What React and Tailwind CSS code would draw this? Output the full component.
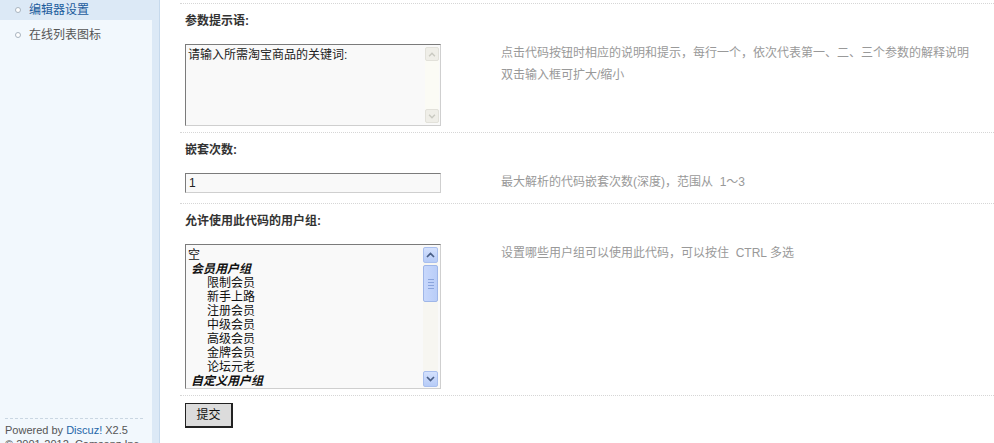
import React from "react";

const FONT = "font-['Liberation_Sans','Noto_Sans_CJK_SC',sans-serif]";

function Chevron({ dir, color, w = 9, h = 6 }) {
  return (
    <svg width={w} height={h} viewBox="0 0 9 6">
      <path
        d={dir === "up" ? "M1 5 L4.5 1.5 L8 5" : "M1 1 L4.5 4.5 L8 1"}
        stroke={color}
        strokeWidth="1.7"
        fill="none"
      />
    </svg>
  );
}

function Bullet() {
  return <span className="inline-block w-[6px] h-[6px] rounded-full border border-[#a9b4bf] bg-white mr-[8px]" />;
}

function DisabledScrollbar() {
  return (
    <div className="w-[14px] my-[2px] mr-[1px] flex flex-col justify-between bg-[#fbfbf5]">
      <div className="h-[14px] flex items-center justify-center bg-[#efeee8] border border-[#e2e1da] rounded-[2px]">
        <Chevron dir="up" color="#c9c9c1" w={8} h={5} />
      </div>
      <div className="h-[14px] flex items-center justify-center bg-[#efeee8] border border-[#e2e1da] rounded-[2px]">
        <Chevron dir="down" color="#c9c9c1" w={8} h={5} />
      </div>
    </div>
  );
}

function XPScrollbar() {
  return (
    <div className="w-[15px] mt-[2px] mb-[1px] mr-[2px] flex flex-col bg-[#f7f6f1]">
      <div className="h-[16px] flex items-center justify-center bg-gradient-to-b from-[#d4e1fd] to-[#b6cbf7] border border-[#a9bfee] rounded-[2px]">
        <Chevron dir="up" color="#4a5f86" />
      </div>
      <div className="mt-[2px] h-[37px] flex flex-col items-center justify-center gap-[2px] bg-gradient-to-r from-[#c8d8fc] to-[#b9cdf8] border border-[#9fb6e8] rounded-[2px]">
        <div className="w-[6px] h-px bg-[#8aa4dc]" />
        <div className="w-[6px] h-px bg-[#8aa4dc]" />
        <div className="w-[6px] h-px bg-[#8aa4dc]" />
        <div className="w-[6px] h-px bg-[#8aa4dc]" />
      </div>
      <div className="flex-1" />
      <div className="h-[16px] flex items-center justify-center bg-gradient-to-b from-[#d4e1fd] to-[#b6cbf7] border border-[#a9bfee] rounded-[2px]">
        <Chevron dir="down" color="#4a5f86" />
      </div>
    </div>
  );
}

const inset =
  "border border-t-[#7b7b7b] border-l-[#7b7b7b] border-b-[#cfcfcf] border-r-[#cfcfcf] bg-[#f9f9f9]";

function LabelRow({ children }) {
  return (
    <div className="pl-[5px] pt-[8px] pb-[6px] leading-[18px] font-bold text-[#333]">{children}</div>
  );
}

export default function App() {
  const groups = [
    { t: "空", k: "plain" },
    { t: "会员用户组", k: "group" },
    { t: "限制会员", k: "opt" },
    { t: "新手上路", k: "opt" },
    { t: "注册会员", k: "opt" },
    { t: "中级会员", k: "opt" },
    { t: "高级会员", k: "opt" },
    { t: "金牌会员", k: "opt" },
    { t: "论坛元老", k: "opt" },
    { t: "自定义用户组", k: "group" },
  ];

  return (
    <div className={`flex h-[443px] w-[994px] overflow-hidden bg-white text-[12px] ${FONT}`}>
      {/* Sidebar */}
      <aside className="w-[160px] shrink-0 flex bg-[#dce9f6] border-r border-[#c6d9ec]">
        <div className="w-[152px] flex flex-col">
          <div className="h-[20px] flex items-center pl-[15px] text-[#1d5c9c] leading-[20px]">
            <Bullet />
            编辑器设置
          </div>
          <div className="flex-1 flex flex-col bg-[#f2f8fd]">
            <div className="h-[30px] flex items-center pl-[15px] text-[#555]">
              <Bullet />
              在线列表图标
            </div>
            <div className="flex-1" />
            <div className="mx-[5px] mr-[9px] h-[25px] overflow-hidden border-t border-dashed border-[#c9d6e2] pt-[4px] text-[11px] leading-[14px] text-[#555] font-['Liberation_Sans',sans-serif]">
              <div>
                Powered by <span className="text-[#2366a8]">Discuz!</span> X2.5
              </div>
              <div>© 2001-2012, Comsenz Inc.</div>
            </div>
          </div>
        </div>
      </aside>

      {/* Main */}
      <main className="flex-1 pl-[20px] pt-[3px]">
        <div className="border-t border-dotted border-[#d6d6d6]">
          {/* Row 1 */}
          <LabelRow>参数提示语:</LabelRow>
          <div className="grid grid-cols-[321px_1fr] border-b border-dotted border-[#d6d6d6]">
            <div className="pl-[5px] pt-[8px] pb-[6px]">
              <div className={`w-[256px] h-[82px] flex ${inset}`}>
                <div className="flex-1 pl-[2px] pt-[2px] leading-[16px] text-[#222]">请输入所需淘宝商品的关键词:</div>
                <DisabledScrollbar />
              </div>
            </div>
            <div className="pt-[6px] leading-[22px] text-[#999]">
              <div>点击代码按钮时相应的说明和提示，每行一个，依次代表第一、二、三个参数的解释说明</div>
              <div>双击输入框可扩大/缩小</div>
            </div>
          </div>

          {/* Row 2 */}
          <LabelRow>嵌套次数:</LabelRow>
          <div className="grid grid-cols-[321px_1fr] border-b border-dotted border-[#d6d6d6]">
            <div className="pl-[5px] pt-[8px] pb-[10px]">
              <div className={`w-[256px] h-[20px] pl-[3px] leading-[18px] text-[#222] ${inset}`}>1</div>
            </div>
            <div className="pt-[6px] leading-[22px] text-[#999]">最大解析的代码嵌套次数(深度)，范围从&nbsp; 1～3</div>
          </div>

          {/* Row 3 */}
          <LabelRow>允许使用此代码的用户组:</LabelRow>
          <div className="grid grid-cols-[321px_1fr] border-b border-dotted border-[#d6d6d6]">
            <div className="pl-[5px] pt-[8px] pb-[6px]">
              <div className={`w-[256px] h-[145px] flex ${inset}`}>
                <div className="flex-1 pt-[3px] leading-[14px] text-[#111]">
                  {groups.map((g, i) => (
                    <div
                      key={i}
                      className={
                        g.k === "plain"
                          ? "pl-[2px]"
                          : g.k === "group"
                          ? "pl-[5px] font-bold italic"
                          : "pl-[21px]"
                      }
                    >
                      {g.t}
                    </div>
                  ))}
                </div>
                <XPScrollbar />
              </div>
            </div>
            <div className="pt-[6px] leading-[22px] text-[#999]">设置哪些用户组可以使用此代码，可以按住&nbsp; CTRL 多选</div>
          </div>

          {/* Submit */}
          <div className="pl-[5px] pt-[7px]">
            <button className="w-[48px] h-[25px] flex items-center justify-center bg-[#dcdcdc] border border-[#222] border-b-2 border-r-2 text-[12px] text-[#111]">
              提交
            </button>
          </div>
        </div>
      </main>
    </div>
  );
}
